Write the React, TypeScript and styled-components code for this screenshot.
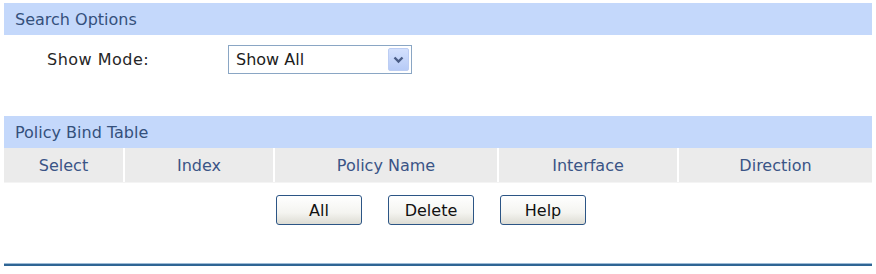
import React, { useState } from "react";
import styled, { createGlobalStyle } from "styled-components";

const GlobalStyle = createGlobalStyle`
  html, body {
    margin: 0;
    padding: 0;
    background: #ffffff;
  }
  body {
    font-family: "DejaVu Sans", Verdana, sans-serif;
    font-size: 16px;
  }
`;

const Page = styled.div`
  width: 868px;
  padding: 3px 4px 0 4px;
`;

const SectionBar = styled.div`
  height: 32px;
  display: flex;
  align-items: center;
  padding-left: 11px;
  background: #c4d8fb;
  color: #34507c;
  font-size: 16px;
`;

const FormRow = styled.div`
  display: grid;
  grid-template-columns: 181px 184px;
  align-items: center;
  padding: 10px 0 0 43px;
  height: 29px;
  margin-bottom: 42px;
`;

const Label = styled.span`
  color: #262626;
  font-size: 16px;
  letter-spacing: 0.5px;
`;

const SelectBox = styled.div`
  position: relative;
  box-sizing: border-box;
  height: 29px;
  border: 1px solid #8aa6c4;
  background: #fff;
  display: flex;
  align-items: center;
  padding-left: 7px;
  color: #1c1c1c;
  font-size: 16px;
`;

const DropButton = styled.div`
  position: absolute;
  right: 2px;
  top: 2px;
  bottom: 2px;
  width: 21px;
  box-sizing: border-box;
  border: 1px solid #bccdf3;
  border-radius: 2px;
  background: linear-gradient(#d3e0fd, #b7cbf7);
  display: flex;
  align-items: center;
  justify-content: center;
`;

const Table = styled.div`
  display: grid;
  grid-template-columns: 121px 150px 224px 180px 1fr;
  column-gap: 0;
  background: #ebebeb;
  border-bottom: 1px solid #f4f4f4;
`;

const HeadCell = styled.div<{ $last?: boolean }>`
  height: 34px;
  display: flex;
  align-items: center;
  justify-content: center;
  color: #3a5486;
  font-size: 16px;
  border-right: ${(p) => (p.$last ? "none" : "2px solid #ffffff")};
`;

const ButtonRow = styled.div`
  display: flex;
  justify-content: center;
  gap: 26px;
  padding: 12px 14px 0 0;
`;

const Button = styled.button`
  width: 86px;
  height: 30px;
  box-sizing: border-box;
  border: 1px solid #2c5585;
  border-radius: 3px;
  background: linear-gradient(#ffffff 0%, #f4f4f0 60%, #dddcd4 100%);
  color: #111;
  font-family: "DejaVu Sans", Verdana, sans-serif;
  font-size: 16px;
  padding: 0;
  cursor: pointer;
`;

const Divider = styled.div`
  margin-top: 39px;
  height: 2px;
  background: #2f6594;
  box-shadow: 0 -1px 0 #9dbbd6, 0 1px 0 #9dbbd6;
`;

const Chevron = () => (
  <svg width="11" height="8" viewBox="0 0 11 8">
    <path d="M1.5 1.5 L5.5 5.5 L9.5 1.5" fill="none" stroke="#4a5d86" strokeWidth="2.4" />
  </svg>
);

const columns = ["Select", "Index", "Policy Name", "Interface", "Direction"];

const App = () => {
  const [mode] = useState("Show All");

  return (
    <>
      <GlobalStyle />
      <Page>
        <SectionBar>Search Options</SectionBar>
        <FormRow>
          <Label>Show Mode:</Label>
          <SelectBox>
            {mode}
            <DropButton>
              <Chevron />
            </DropButton>
          </SelectBox>
        </FormRow>

        <SectionBar>Policy Bind Table</SectionBar>
        <Table>
          {columns.map((c, i) => (
            <HeadCell key={c} $last={i === columns.length - 1}>
              {c}
            </HeadCell>
          ))}
        </Table>

        <ButtonRow>
          <Button>All</Button>
          <Button>Delete</Button>
          <Button>Help</Button>
        </ButtonRow>

        <Divider />
      </Page>
    </>
  );
};

export default App;
